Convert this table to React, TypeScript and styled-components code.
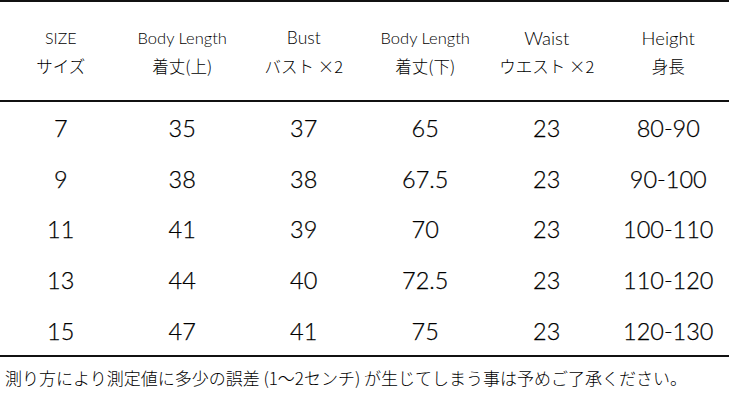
import React from "react";
import styled, { createGlobalStyle } from "styled-components";

const GlobalStyle = createGlobalStyle`
  body {
    margin: 0;
    background: #ffffff;
    color: #000000;
    font-family: Lato, "Noto Sans CJK JP", sans-serif;
  }
`;

const Wrapper = styled.div`
  width: 730px;
  height: 400px;
  overflow: hidden;
`;

const Table = styled.div`
  width: 729px;
  border-top: 2px solid #111;
  border-bottom: 2px solid #111;
`;

const HeaderRow = styled.div`
  display: grid;
  grid-template-columns: repeat(6, 1fr);
  height: 98px;
  border-bottom: 2px solid #111;
  align-items: center;
`;

const HeadCell = styled.div`
  display: flex;
  flex-direction: column;
  align-items: center;
  gap: 6px;
  padding-top: 2px;
`;

const HeadEn = styled.span<{ $size: number }>`
  font-size: ${(p) => p.$size}px;
  line-height: 22px;
  font-weight: 300;
`;

const HeadJa = styled.span`
  font-family: "Noto Sans CJK JP", sans-serif;
  font-size: 16.5px;
  line-height: 22px;
  font-weight: 300;
`;

const Row = styled.div`
  display: grid;
  grid-template-columns: repeat(6, 1fr);
  height: 50.6px;
  align-items: center;
`;

const Cell = styled.div`
  text-align: center;
  font-size: 23.5px;
  font-weight: 300;
  padding-top: 2px;
  -webkit-text-stroke: 0.25px #000;
`;

const Note = styled.p`
  margin: 0;
  padding: 10px 0 0 5px;
  font-family: "Noto Sans CJK JP", sans-serif;
  font-size: 17px;
  line-height: 22px;
  font-weight: 300;
`;

const headers = [
  { en: "SIZE", size: 16, ja: "サイズ" },
  { en: "Body Length", size: 16.5, ja: "着丈(上)" },
  { en: "Bust", size: 17.5, ja: "バスト ×2" },
  { en: "Body Length", size: 16.5, ja: "着丈(下)" },
  { en: "Waist", size: 18.5, ja: "ウエスト ×2" },
  { en: "Height", size: 18.5, ja: "身長" },
];

const rows = [
  ["7", "35", "37", "65", "23", "80-90"],
  ["9", "38", "38", "67.5", "23", "90-100"],
  ["11", "41", "39", "70", "23", "100-110"],
  ["13", "44", "40", "72.5", "23", "110-120"],
  ["15", "47", "41", "75", "23", "120-130"],
];

export default function App() {
  return (
    <Wrapper>
      <GlobalStyle />
      <Table>
        <HeaderRow>
          {headers.map((h, i) => (
            <HeadCell key={i}>
              <HeadEn $size={h.size}>{h.en}</HeadEn>
              <HeadJa>{h.ja}</HeadJa>
            </HeadCell>
          ))}
        </HeaderRow>
        {rows.map((r, i) => (
          <Row key={i}>
            {r.map((v, j) => (
              <Cell key={j}>{v}</Cell>
            ))}
          </Row>
        ))}
      </Table>
      <Note>
        測り方により測定値に多少の誤差 (1〜2センチ) が生じてしまう事は予めご了承ください。
      </Note>
    </Wrapper>
  );
}
